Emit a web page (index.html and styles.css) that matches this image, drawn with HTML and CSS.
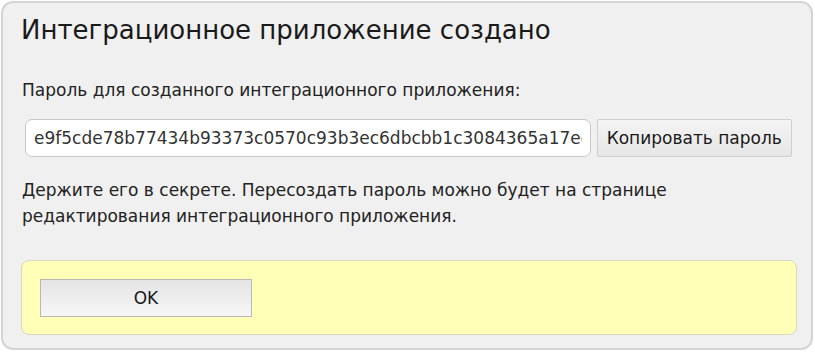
FILE: index.html
```html
<!DOCTYPE html>
<html lang="ru">
<head>
  <meta charset="UTF-8">
  <title>Интеграционное приложение создано</title>
  <link rel="stylesheet" href="styles.css">
</head>
<body>
  <div class="dialog">
    <h1 class="titulo">Интеграционное приложение создано</h1>

    <p class="rotulo">Пароль для созданного интеграционного приложения:</p>

    <div class="senha-linha">
      <input type="text" class="senha" value="e9f5cde78b77434b93373c0570c93b3ec6dbcbb1c3084365a17ed2b9" readonly>
      <button class="copiar">Копировать пароль</button>
    </div>

    <p class="aviso">Держите его в секрете. Пересоздать пароль можно будет на странице редактирования интеграционного приложения.</p>

    <div class="rodape">
      <button class="ok">OK</button>
    </div>
  </div>
</body>
</html>
```

FILE: styles.css
```css
* {
  box-sizing: border-box;
}

body {
  margin: 0;
  padding: 1px;
  background-color: #fff;
  font-family: 'DejaVu Sans', 'Noto Sans', sans-serif;
  color: #222;
}

.dialog {
  width: 812px;
  height: 349px;
  background-color: #f0f0f0;
  border: 2px solid #d4d4d4;
  border-radius: 12px;
  padding: 9px 19px 0 18px;
}

.titulo {
  margin: 0;
  font-size: 26px;
  font-weight: normal;
  line-height: 36px;
  color: #1a1a1a;
}

.rotulo {
  margin: 31px 0 0 1px;
  font-size: 17px;
  line-height: 22px;
}

.senha-linha {
  display: flex;
  gap: 6px;
  margin: 18px 0 0 4px;
}

.senha {
  width: 567px;
  height: 38px;
  padding: 0 8px;
  font-family: inherit;
  font-size: 17px;
  color: #333;
  background: #fff;
  border: 1px solid #c8c8c8;
  border-radius: 7px;
}

.copiar {
  width: 196px;
  height: 38px;
  font-family: inherit;
  font-size: 17px;
  color: #1a1a1a;
  background: linear-gradient(#f4f4f4, #e6e6e6);
  border: 1px solid #cfcfcf;
  border-radius: 2px;
}

.aviso {
  margin: 20px 0 0 1px;
  font-size: 17px;
  line-height: 26px;
  width: 700px;
}

.rodape {
  margin: 31px 0 0 0;
  width: 776px;
  height: 75px;
  background-color: #ffffb8;
  border: 1px solid #d8d8c0;
  border-radius: 8px;
  padding: 18px 0 0 18px;
}

.ok {
  width: 212px;
  height: 38px;
  font-family: inherit;
  font-size: 17px;
  color: #1a1a1a;
  background: linear-gradient(#e4e4e4, #f6f6f6);
  border: 1px solid #b8b8b8;
  border-radius: 0;
}
```
